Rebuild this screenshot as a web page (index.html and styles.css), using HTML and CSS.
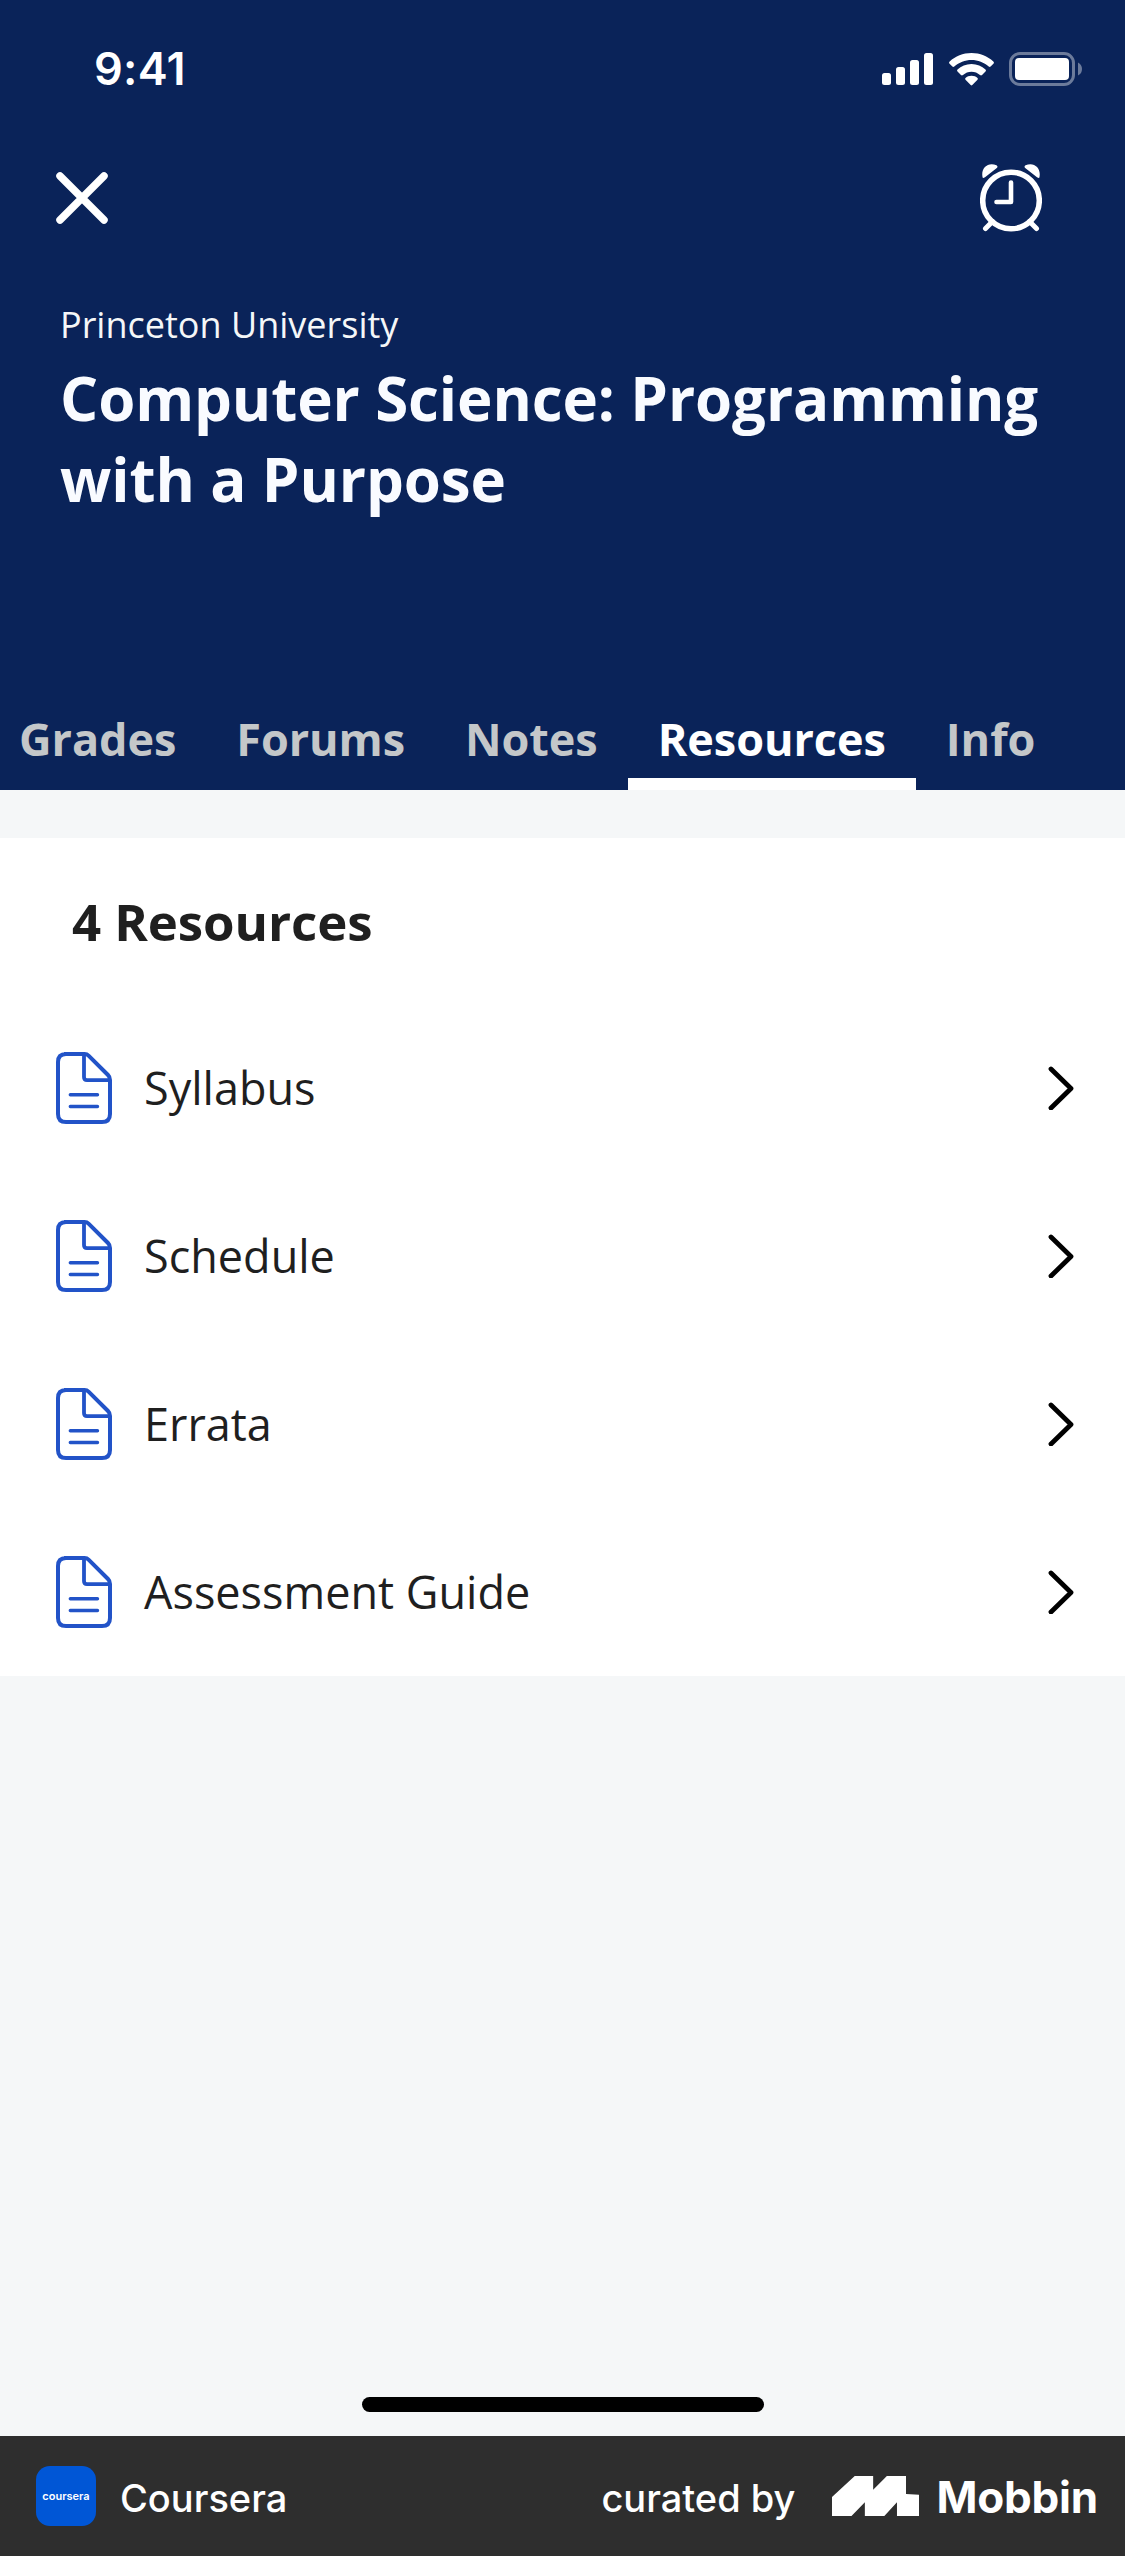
FILE: index.html
```html
<!DOCTYPE html>
<html lang="en">
<head>
<meta charset="utf-8">
<title>Computer Science: Programming with a Purpose</title>
<link rel="stylesheet" href="styles.css">
</head>
<body>
<svg class="sprite" aria-hidden="true">
  <symbol id="icon-doc" viewBox="0 0 56 72">
    <path d="M8 2H28.500Q31 2 32.800 3.800L52 23Q54 25 54 28V62Q54 70 46 70H10Q2 70 2 62V10Q2 2 10 2Z" fill="none" stroke="currentColor" stroke-width="4"/>
    <path d="M28 3V25Q28 28.200 31 28.200H53" fill="none" stroke="currentColor" stroke-width="3.800"/>
    <path d="M14.300 42.700H41.500M14.300 54.500H41.500" fill="none" stroke="currentColor" stroke-width="3.400" stroke-linecap="round"/>
  </symbol>
  <symbol id="icon-chevron" viewBox="0 0 26 44">
    <path d="M3 3L23 22.500L3 42" fill="none" stroke="currentColor" stroke-width="4.800" stroke-linecap="round" stroke-linejoin="round"/>
  </symbol>
</svg>

<header class="header">
  <div class="status">
    <span class="status-time">9:41</span>
    <div class="status-icons">
      <svg class="signal" viewBox="0 0 51 32"><rect y="20" width="9" height="12" rx="2.500"/><rect x="14" y="14" width="9" height="18" rx="2.500"/><rect x="28" y="7" width="9" height="25" rx="2.500"/><rect x="42" width="9" height="32" rx="2.500"/></svg>
      <svg class="wifi" viewBox="0 0 45 33">
        <path d="M22.500 0C31 0 38.600 3.200 44.300 8.500Q45.500 9.700 44.400 10.800L41.600 13.600Q40.700 14.400 39.700 13.500C35 9.300 29 6.900 22.500 6.900S10 9.300 5.300 13.500Q4.300 14.400 3.400 13.600L.6 10.800Q-.5 9.700 .7 8.500C6.400 3.200 14 0 22.500 0Z"/>
        <path d="M22.500 11C28 11 32.800 13.100 36.500 16.500Q37.500 17.500 36.500 18.500L33 22Q32.100 22.900 31 22C28.700 19.900 25.700 18.700 22.500 18.700S16.300 19.900 14 22Q12.900 22.900 12 22L8.500 18.500Q7.500 17.500 8.500 16.500C12.200 13.100 17 11 22.500 11Z"/>
        <path d="M22.500 22.800C25 22.800 27 23.700 28.500 25Q29.300 25.900 28.500 26.700L23.300 32Q22.500 32.800 21.700 32L16.500 26.700Q15.700 25.900 16.500 25C18 23.700 20 22.800 22.500 22.800Z"/>
      </svg>
      <svg class="battery" viewBox="0 0 73 34"><rect x="1.500" y="1.500" width="63" height="31" rx="9.500" fill="none" stroke="#fff" stroke-opacity=".4" stroke-width="3"/><rect x="6" y="6" width="54" height="22" rx="4"/><path d="M69 10.500Q73 12.500 73 17T69 23.500Z" fill-opacity=".4"/></svg>
    </div>
  </div>

  <nav class="actions">
    <svg class="close" viewBox="0 0 52 52"><path d="M4 4L48 48M48 4L4 48" fill="none" stroke="#fff" stroke-width="7.500" stroke-linecap="round"/></svg>
    <svg class="alarm" viewBox="0 0 62 68">
      <circle cx="31" cy="36.500" r="28.300" fill="none" stroke="#fff" stroke-width="5.500"/>
      <path d="M31 18.500V38H16.500" fill="none" stroke="#fff" stroke-width="4.600" stroke-linecap="round" stroke-linejoin="round"/>
      <path d="M12.500 57.500L5.500 64.500M49.500 57.500L56.500 64.500" stroke="#fff" stroke-width="5" stroke-linecap="round"/>
      <path d="M2.600 13.500C.5 4 8 -2.500 16.500 1.300Q18.500 2.600 16.500 4.300L5 13.200Q3 14.500 2.600 13.500ZM59.400 13.500C61.500 4 54 -2.500 45.500 1.300Q43.500 2.600 45.500 4.300L57 13.200Q59 14.500 59.400 13.500Z" fill="#fff"/>
    </svg>
  </nav>

  <div class="course">
    <p class="school">Princeton University</p>
    <h1 class="title">Computer Science: Programming with a Purpose</h1>
  </div>

  <nav class="tabs">
    <span class="tab">Grades</span>
    <span class="tab">Forums</span>
    <span class="tab">Notes</span>
    <span class="tab tab-active">Resources</span>
    <span class="tab">Info</span>
  </nav>
</header>

<main class="content">
  <section class="card">
    <h2 class="card-title">4 Resources</h2>
    <div class="row"><svg class="doc"><use href="#icon-doc"/></svg><span class="label">Syllabus</span><svg class="chevron"><use href="#icon-chevron"/></svg></div>
    <div class="row"><svg class="doc"><use href="#icon-doc"/></svg><span class="label">Schedule</span><svg class="chevron"><use href="#icon-chevron"/></svg></div>
    <div class="row"><svg class="doc"><use href="#icon-doc"/></svg><span class="label">Errata</span><svg class="chevron"><use href="#icon-chevron"/></svg></div>
    <div class="row"><svg class="doc"><use href="#icon-doc"/></svg><span class="label">Assessment Guide</span><svg class="chevron"><use href="#icon-chevron"/></svg></div>
  </section>
  <div class="home-indicator"></div>
</main>

<footer class="footer">
  <div class="app-icon"><span class="app-word">coursera</span></div>
  <span class="app-name">Coursera</span>
  <span class="curated">curated by</span>
  <svg class="mobbin-mark" viewBox="755 288 241 120" preserveAspectRatio="none"><path d="M755 351L818 288H869V329L907 288H960V342L996 344V408H935V367L900 408H846V367L809 408H755Z"/></svg>
  <span class="mobbin">Mobbin</span>
</footer>
</body>
</html>
```
FILE: styles.css
```css
* { box-sizing: border-box; }

body {
  margin: 0;
  width: 1125px;
  height: 2556px;
  display: flex;
  flex-direction: column;
  overflow: hidden;
  background: #f5f7f8;
  font-family: "Open Sans", "Noto Sans", sans-serif;
}

svg { display: block; flex: none; fill: #fff; }
h1, h2, p { margin: 0; }
.sprite { position: absolute; width: 0; height: 0; }

.header {
  height: 790px;
  display: flex;
  flex-direction: column;
  background: #0a2359;
  color: #fff;
  overflow: hidden;
}

.status {
  height: 138px;
  padding: 0 43px 0 94px;
  display: flex;
  align-items: center;
  justify-content: space-between;
}
.status-time {
  font: 600 45px/54px Inter, sans-serif;
  letter-spacing: 0.3px;
}
.status-icons { display: flex; align-items: center; }
.signal { width: 51px; height: 32px; }
.wifi { width: 45px; height: 33px; margin: 0 15.500px; }
.battery { width: 73px; height: 34px; }

.actions {
  height: 120px;
  padding: 0 83px 0 56px;
  display: flex;
  align-items: center;
  justify-content: space-between;
}
.close { width: 52px; height: 52px; }
.alarm { width: 62px; height: 68px; }

.course { padding: 43px 60px 0; }
.school { font-size: 36px; line-height: 48px; color: #f5f7f8; }
.title {
  margin-top: 9px;
  font-size: 60px;
  font-weight: 700;
  line-height: 81px;
  letter-spacing: -0.1px;
  color: #f9fbff;
}

.tabs { margin: auto 0 0 -11px; display: flex; }
.tab {
  height: 84px;
  padding: 0 30px;
  border-bottom: 12px solid transparent;
  font-size: 45px;
  font-weight: 700;
  line-height: 66px;
  letter-spacing: -0.06px;
  color: #c4c7c9;
}
.tab-active { color: #fff; border-bottom-color: #fff; }

.content {
  height: 1646px;
  padding: 48px 0 24px;
  display: flex;
  flex-direction: column;
  justify-content: space-between;
  align-items: center;
}
.card { width: 100%; background: #fff; color: #1f1f1f; }
.card-title {
  padding-left: 72px;
  font-size: 51px;
  font-weight: 700;
  line-height: 166px;
  letter-spacing: -0.1px;
}
.row {
  height: 168px;
  padding: 0 51px 0 56px;
  display: flex;
  align-items: center;
}
.doc { width: 56px; height: 72px; color: #2253c8; }
.label { flex: 1; margin-left: 32px; font-size: 45px; line-height: 60px; }
.chevron { width: 26px; height: 44px; color: #000; }

.home-indicator {
  width: 402px;
  height: 15px;
  border-radius: 8px;
  background: #000;
}

.footer {
  height: 120px;
  padding: 0 27px 0 36px;
  display: flex;
  align-items: center;
  background: #2e2e2e;
  color: #fff;
  font-family: Inter, sans-serif;
  white-space: nowrap;
}
.app-icon {
  width: 60px;
  height: 60px;
  border-radius: 14px;
  background: #0056d6;
  display: flex;
  align-items: center;
  justify-content: center;
}
.app-word { font-size: 11px; font-weight: 600; line-height: 14px; }
.app-name { margin-left: 24px; padding-top: 3px; font-size: 38px; font-weight: 500; line-height: 48px; }
.curated { margin-left: auto; padding-top: 3px; font-size: 38px; font-weight: 500; line-height: 48px; }
.mobbin-mark { margin-left: 37px; width: 87px; height: 40px; }
.mobbin { margin-left: 17px; padding-top: 1px; font-size: 44px; font-weight: 700; line-height: 54px; letter-spacing: -0.2px; }
```
